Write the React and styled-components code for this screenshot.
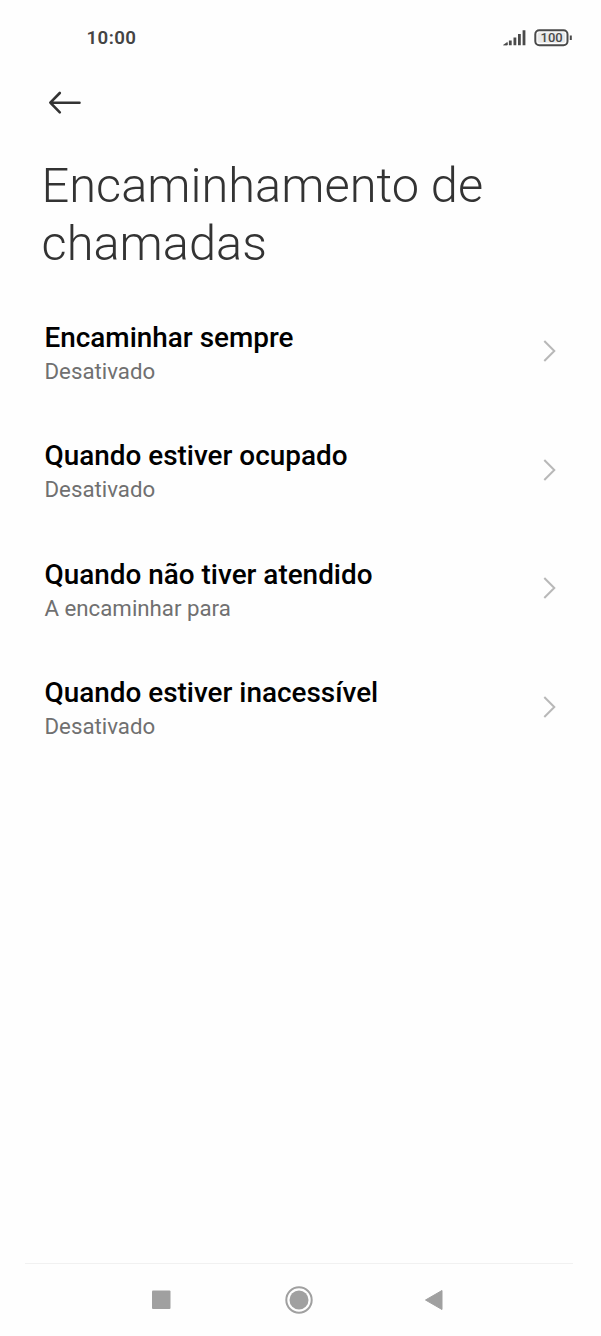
import React from "react";
import styled, { createGlobalStyle } from "styled-components";

const GlobalStyle = createGlobalStyle`
    body{
        margin:0;
        background:#fefefe;
        font-family:Roboto, "Noto Sans", sans-serif;
    }
`;
const Screen = styled.div`
    display:flex;
    flex-direction:column;
    width:601px;
    height:1336px;
    box-sizing:border-box;
    background:#fefefe;
    overflow:hidden;
`;
const StatusBar = styled.header`
    display:flex;
    justify-content:space-between;
    align-items:center;
    height:76px;
    padding:0 28px 0 86.5px;
    box-sizing:border-box;
`;
const Clock = styled.span`
    font-size:18.7px;
    line-height:24px;
    font-weight:600;
    letter-spacing:0.4px;
    color:#444;
`;
const BackButton = styled.button`
    display:flex;
    width:34px;
    height:26px;
    margin:14px 0 0 48px;
    padding:0;
    border:0;
    background:none;
`;
const Title = styled.h1`
    margin:41px 41.5px 0;
    font-size:48.75px;
    line-height:57.5px;
    font-weight:300;
    color:#333;
`;
const List = styled.ul`
    flex:1;
    margin:20px 0 0;
    padding:0;
    list-style:none;
`;
const Row = styled.li`
    display:flex;
    justify-content:space-between;
    align-items:center;
    height:118.5px;
    padding:0 44px 0 44.5px;
    box-sizing:border-box;
`;
const RowText = styled.div`
    padding-top:3px;
`;
const RowTitle = styled.div`
    font-size:27.9px;
    line-height:36px;
    font-weight:500;
    color:#000;
`;
const RowState = styled.div`
    font-size:22.25px;
    line-height:30px;
    color:#707070;
`;
const NavBar = styled.nav`
    display:flex;
    justify-content:space-between;
    align-items:center;
    height:73px;
    margin:0 28px 0 25px;
    padding:0 129px 0 126px;
    box-sizing:border-box;
    border-top:1px solid #f1f1f1;
`;

const options = [
    { name: "Encaminhar sempre", state: "Desativado" },
    { name: "Quando estiver ocupado", state: "Desativado" },
    { name: "Quando não tiver atendido", state: "A encaminhar para" },
    { name: "Quando estiver inacessível", state: "Desativado" },
];

const StatusIcons = () => (
    <svg width="70" height="20" viewBox="0 0 70 20">
        <g stroke="#4a4a4a" strokeWidth="2.8">
            <path d="M7.300 12.400V17.300M11.900 9.500V17.300M16.400 5.900V17.300M21 2.300V17.300" />
        </g>
        <path d="M0.600 17L4.300 14.500V17Z" fill="#4a4a4a" stroke="#4a4a4a" strokeWidth="0.800" />
        <rect x="32.300" y="2.200" width="32.200" height="15" rx="4" fill="#fefefe" stroke="#4a4a4a" strokeWidth="2" />
        <rect x="34.600" y="4.600" width="27.600" height="10.200" rx="1.500" fill="#e9e9e9" />
        <path d="M67.800 7.500v4.500" stroke="#4a4a4a" strokeWidth="2" />
        <text x="48.600" y="14.400" textAnchor="middle" fontSize="13" fontWeight="500" fill="#4a4a4a">100</text>
    </svg>
);

const App = () => {
    return (
        <Screen>
            <GlobalStyle />
            <StatusBar>
                <Clock>10:00</Clock>
                <StatusIcons />
            </StatusBar>
            <BackButton aria-label="Voltar">
                <svg width="34" height="26" viewBox="0 0 34 26" fill="none" stroke="#333" strokeWidth="2.600" strokeLinecap="round" strokeLinejoin="round">
                    <path d="M31.500 12.700H2.500M11.800 3L2.300 12.700L11.800 22.400" />
                </svg>
            </BackButton>
            <Title>Encaminhamento de chamadas</Title>
            <List>
                {options.map((option) => (
                    <Row key={option.name}>
                        <RowText>
                            <RowTitle>{option.name}</RowTitle>
                            <RowState>{option.state}</RowState>
                        </RowText>
                        <svg width="14" height="24" viewBox="0 0 14 24" fill="none" stroke="#b8b8b8" strokeWidth="2">
                            <path d="M1.300 2L11.300 12L1.300 22" />
                        </svg>
                    </Row>
                ))}
            </List>
            <NavBar>
                <svg width="20" height="20" viewBox="0 0 20 20">
                    <rect x="1" y="0.500" width="18.500" height="18.500" rx="1" fill="#a0a0a0" />
                </svg>
                <svg width="30" height="28" viewBox="0 0 30 28">
                    <circle cx="16" cy="14" r="12.700" fill="none" stroke="#a0a0a0" strokeWidth="2" />
                    <circle cx="16" cy="14" r="9.500" fill="#a0a0a0" />
                </svg>
                <svg width="20" height="22" viewBox="0 0 20 22">
                    <path d="M18 1.500V20.500L1.500 11Z" fill="#a0a0a0" stroke="#a0a0a0" strokeLinejoin="round" />
                </svg>
            </NavBar>
        </Screen>
    );
};
export default App;
